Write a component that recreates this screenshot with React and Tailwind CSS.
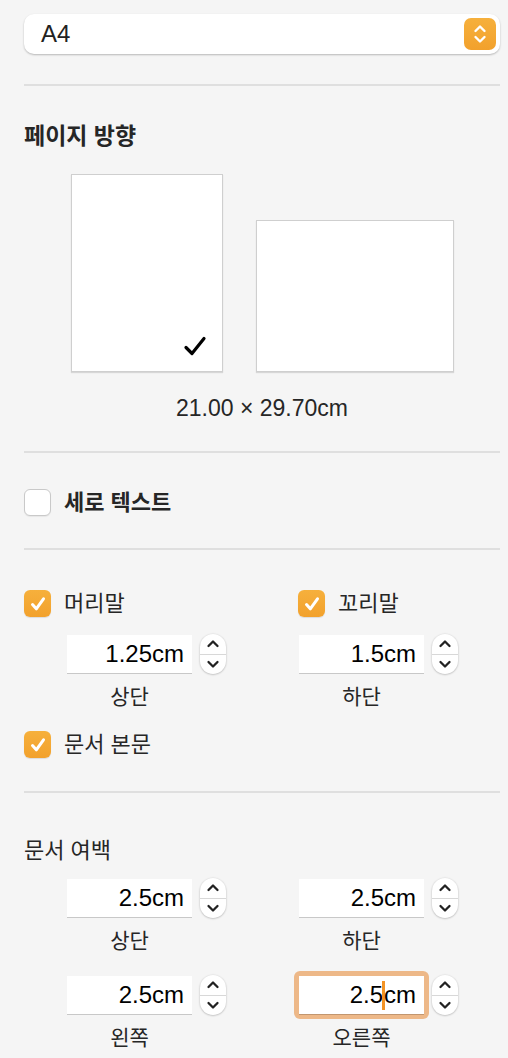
import React from 'react'

const FONT = '"Liberation Sans", "Noto Sans CJK KR", sans-serif'

function Check({ on }) {
  if (!on) {
    return (
      <div className="w-[27px] h-[27px] rounded-[6px] bg-white border border-[#c9c9c9] shadow-[0_1px_1px_rgba(0,0,0,0.06)] shrink-0" />
    )
  }
  return (
    <div className="w-[27px] h-[27px] rounded-[6px] bg-gradient-to-b from-[#f6b03c] to-[#f2a12c] flex items-center justify-center shrink-0 shadow-[0_1px_1px_rgba(0,0,0,0.1)]">
      <svg width="18" height="18" viewBox="0 0 18 18" fill="none">
        <path d="M3.5 9.5 L7.3 13.8 L14.5 3.8" stroke="white" strokeWidth="3" strokeLinecap="round" strokeLinejoin="round" />
      </svg>
    </div>
  )
}

function Stepper() {
  return (
    <div className="w-[26px] h-[40px] rounded-[13px] bg-white shadow-[0_0.5px_2px_rgba(0,0,0,0.3)] flex flex-col items-center">
      <div className="flex-1 flex items-center justify-center">
        <svg width="14" height="9" viewBox="0 0 14 9" fill="none">
          <path d="M2.5 7 L7 2.5 L11.5 7" stroke="#222" strokeWidth="2.3" strokeLinecap="round" strokeLinejoin="round" />
        </svg>
      </div>
      <div className="w-full h-px bg-[#d8d8d8]" />
      <div className="flex-1 flex items-center justify-center">
        <svg width="14" height="9" viewBox="0 0 14 9" fill="none">
          <path d="M2.5 2 L7 6.5 L11.5 2" stroke="#222" strokeWidth="2.3" strokeLinecap="round" strokeLinejoin="round" />
        </svg>
      </div>
    </div>
  )
}

function Field({ value, label, focused, caretAfter }) {
  return (
    <div className="flex flex-col items-start">
      <div className="flex items-center gap-[8px] h-[40px]">
        <div className={focused ? 'rounded-[6px] p-[5px] -m-[5px] bg-[#edb888]' : ''}>
          <div className="w-[125px] h-[38px] bg-white shadow-[0_1px_0_rgba(0,0,0,0.18)] flex items-center justify-end pr-[8px] text-[24px] leading-[38px] text-black">
            {caretAfter ? (
              <>
                <span>{caretAfter}</span>
                <span className="inline-block w-[3px] h-[29px] bg-[#f39325] -mx-[1px]" />
                <span>{value.slice(caretAfter.length)}</span>
              </>
            ) : (
              value
            )}
          </div>
        </div>
        <Stepper />
      </div>
      <div className="w-[125px] text-center text-[21px] leading-[22px] text-[#262626] mt-[12px]">{label}</div>
    </div>
  )
}

function Sep() {
  return <div className="h-[2px] bg-[#dfdfdf]" />
}

function CheckRow({ on, children, bold }) {
  return (
    <div className="flex items-center gap-[13px] h-[27px]">
      <Check on={on} />
      <span className={'text-[22px] leading-[27px] text-[#262626]' + (bold ? ' font-semibold' : '')}>{children}</span>
    </div>
  )
}

export default function App() {
  return (
    <div className="min-h-screen bg-[#f5f5f5] pl-[24px] pr-[8px] pt-[14px]" style={{ fontFamily: FONT }}>
      {/* paper size dropdown */}
      <div className="h-[40px] rounded-[10px] bg-white shadow-[0_1px_2px_rgba(0,0,0,0.25)] flex items-center justify-between pl-[17px] pr-[4px]">
        <span className="text-[24px] leading-[40px] text-[#222]">A4</span>
        <div className="w-[32px] h-[32px] rounded-[7px] bg-gradient-to-b from-[#f6b03c] to-[#f2a12c] flex items-center justify-center">
          <svg width="16" height="24" viewBox="0 0 16 24" fill="none">
            <path d="M3.5 9 L8 4.5 L12.5 9" stroke="white" strokeWidth="2.4" strokeLinecap="round" strokeLinejoin="round" />
            <path d="M3.5 15 L8 19.5 L12.5 15" stroke="white" strokeWidth="2.4" strokeLinecap="round" strokeLinejoin="round" />
          </svg>
        </div>
      </div>

      <div className="mt-[30px]"><Sep /></div>

      {/* orientation */}
      <div className="mt-[36px] text-[23px] leading-[28px] font-semibold text-[#262626]">페이지 방향</div>
      <div className="mt-[24px] flex items-end justify-center gap-[33px]">
        <div className="w-[152px] h-[198px] bg-white border border-[#cfcfcf] shadow-[0_1px_1px_rgba(0,0,0,0.12)] flex items-end justify-end pr-[15px] pb-[14px]">
          <svg width="24" height="22" viewBox="0 0 24 22" fill="none">
            <path d="M3 12.5 L9 18.5 L21 3.5" stroke="black" strokeWidth="3.2" strokeLinecap="round" strokeLinejoin="round" />
          </svg>
        </div>
        <div className="w-[198px] h-[152px] bg-white border border-[#cfcfcf] shadow-[0_1px_1px_rgba(0,0,0,0.12)]" />
      </div>
      <div className="mt-[24px] text-center text-[23px] leading-[24px] text-[#262626]">21.00 × 29.70cm</div>

      <div className="mt-[31px]"><Sep /></div>

      {/* vertical text */}
      <div className="mt-[36px]">
        <CheckRow on={false} bold>세로 텍스트</CheckRow>
      </div>

      <div className="mt-[32px]"><Sep /></div>

      {/* header / footer */}
      <div className="mt-[40px] grid grid-cols-[274px_1fr]">
        <div>
          <CheckRow on>머리말</CheckRow>
          <div className="mt-[17px] ml-[43px]">
            <Field value="1.25cm" label="상단" />
          </div>
        </div>
        <div>
          <CheckRow on>꼬리말</CheckRow>
          <div className="mt-[17px] ml-[1px]">
            <Field value="1.5cm" label="하단" />
          </div>
        </div>
      </div>
      <div className="mt-[23px]">
        <CheckRow on>문서 본문</CheckRow>
      </div>

      <div className="mt-[33px]"><Sep /></div>

      {/* margins */}
      <div className="mt-[44px] text-[22px] leading-[28px] text-[#262626]">문서 여백</div>
      <div className="mt-[13px] grid grid-cols-[275px_1fr] gap-y-[23px]">
        <div className="ml-[43px]"><Field value="2.5cm" label="상단" /></div>
        <div><Field value="2.5cm" label="하단" /></div>
        <div className="ml-[43px]"><Field value="2.5cm" label="왼쪽" /></div>
        <div><Field value="2.5cm" label="오른쪽" focused caretAfter="2.5" /></div>
      </div>
    </div>
  )
}
